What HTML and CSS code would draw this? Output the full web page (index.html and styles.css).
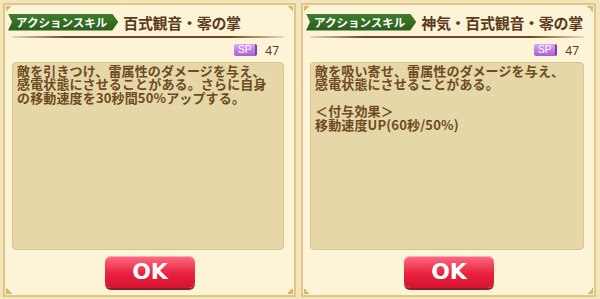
FILE: index.html
```html
<!DOCTYPE html>
<html lang="ja">
<head>
<meta charset="utf-8">
<link rel="stylesheet" href="styles.css">
</head>
<body>
<div class="wrap">
  <section class="panel">
    <span class="corner tl"></span><span class="corner tr"></span><span class="corner bl"></span><span class="corner br"></span>
    <div class="head">
      <span class="tag">アクションスキル</span>
      <span class="title">百式観音・零の掌</span>
    </div>
    <div class="rule"></div>
    <div class="sprow"><span class="sp">SP</span><span class="spv">47</span></div>
    <div class="desc">敵を引きつけ、雷属性のダメージを与え、<br>感電状態にさせることがある。さらに自身<br>の移動速度を30秒間50%アップする。</div>
    <div class="foot"><button class="ok">OK</button></div>
  </section>
  <section class="panel">
    <span class="corner tl"></span><span class="corner tr"></span><span class="corner bl"></span><span class="corner br"></span>
    <div class="head">
      <span class="tag">アクションスキル</span>
      <span class="title">神気・百式観音・零の掌</span>
    </div>
    <div class="rule"></div>
    <div class="sprow"><span class="sp">SP</span><span class="spv">47</span></div>
    <div class="desc">敵を吸い寄せ、雷属性のダメージを与え、<br>感電状態にさせることがある。<br><br>＜付与効果＞<br>移動速度UP(60秒/50%)</div>
    <div class="foot"><button class="ok">OK</button></div>
  </section>
</div>
</body>
</html>
```
FILE: styles.css
```css
html, body { margin: 0; padding: 0; }
body {
  width: 600px; height: 299px; overflow: hidden;
  background: #f3e6bf;
  font-family: "Noto Sans CJK JP", "Noto Sans", sans-serif;
}
.wrap {
  display: flex; gap: 5px;
  padding: 3px 2px 0 3px;
  height: 296px; box-sizing: border-box;
}
.panel {
  position: relative;
  flex: 0 0 293px;
  box-sizing: border-box;
  height: 294px;
  border: 2px solid #e3c584;
  background: #fdf3d7;
  display: flex; flex-direction: column;
  padding: 6px 6px 0 3px;
}
.panel + .panel { flex-basis: 295px; }
.corner { position: absolute; width: 6px; height: 6px; }
.corner.tl { left: 1px; top: 1px; background: linear-gradient(135deg, #d9b76c 50%, transparent 50%); }
.corner.tr { right: 1px; top: 1px; background: linear-gradient(225deg, #d9b76c 50%, transparent 50%); }
.corner.bl { left: 1px; bottom: 1px; background: linear-gradient(45deg, #d9b76c 50%, transparent 50%); }
.corner.br { right: 1px; bottom: 1px; background: linear-gradient(315deg, #d9b76c 50%, transparent 50%); }

.head { display: flex; align-items: center; height: 22px; white-space: nowrap; }
.tag {
  flex: 0 0 auto;
  display: inline-block;
  height: 17px; line-height: 17px;
  padding: 0 11px 0 8px;
  color: #fff; font-size: 11.5px; font-weight: bold;
  background: linear-gradient(#3f7d2b, #2a5e1c);
  clip-path: polygon(0 0, calc(100% - 6px) 0, 100% 50%, calc(100% - 6px) 100%, 0 100%, 4px 50%);
}
.title {
  margin-left: 5px;
  font-size: 15px; font-weight: bold; color: #5b3b1c;
  letter-spacing: -0.3px;
}
.rule {
  height: 2px; margin: 3px 4px 0 4px;
  background: linear-gradient(90deg, rgba(110,75,35,0.15), #6b4824 20%, #6b4824 80%, rgba(110,75,35,0.15));
  border-radius: 1px;
}
.sprow {
  display: flex; justify-content: flex-end; align-items: center;
  height: 16px; margin-top: 4px; padding-right: 9px;
}
.sp {
  display: inline-block; width: 21px; height: 12px; line-height: 12px;
  text-align: center; font-size: 10px; color: #fff; font-family: "Liberation Sans", sans-serif;
  background: linear-gradient(#dba6f2, #a95fd6);
  border-radius: 2px;
  border-right: 2px solid #7a3fa8;
}
.spv { margin-left: 8px; font-size: 12px; color: #5b3b1c; font-family: "Noto Sans", sans-serif; }
.desc {
  margin: 4px 4px 0 4px;
  height: 188px; box-sizing: border-box;
  background: #e5d7a8;
  border: 1px solid #d8c58f;
  border-radius: 4px;
  padding: 1px 4px;
  font-size: 13px; line-height: 13.4px; font-weight: bold; color: #6e4a22;
  letter-spacing: 0.15px;
}
.foot { display: flex; justify-content: center; padding: 6px 0 0 4px; }
.ok {
  width: 90px; height: 32px;
  border: none; border-radius: 6px;
  background: linear-gradient(#ff6d80, #e8223f 55%, #d51330);
  box-shadow: 0 2px 0 #8c1f2a, inset 0 1px 0 #ffb0ba;
  color: #fff; font-family: "DejaVu Sans", sans-serif; font-weight: bold; font-size: 22px;
  padding: 0; line-height: 32px;
}
```
